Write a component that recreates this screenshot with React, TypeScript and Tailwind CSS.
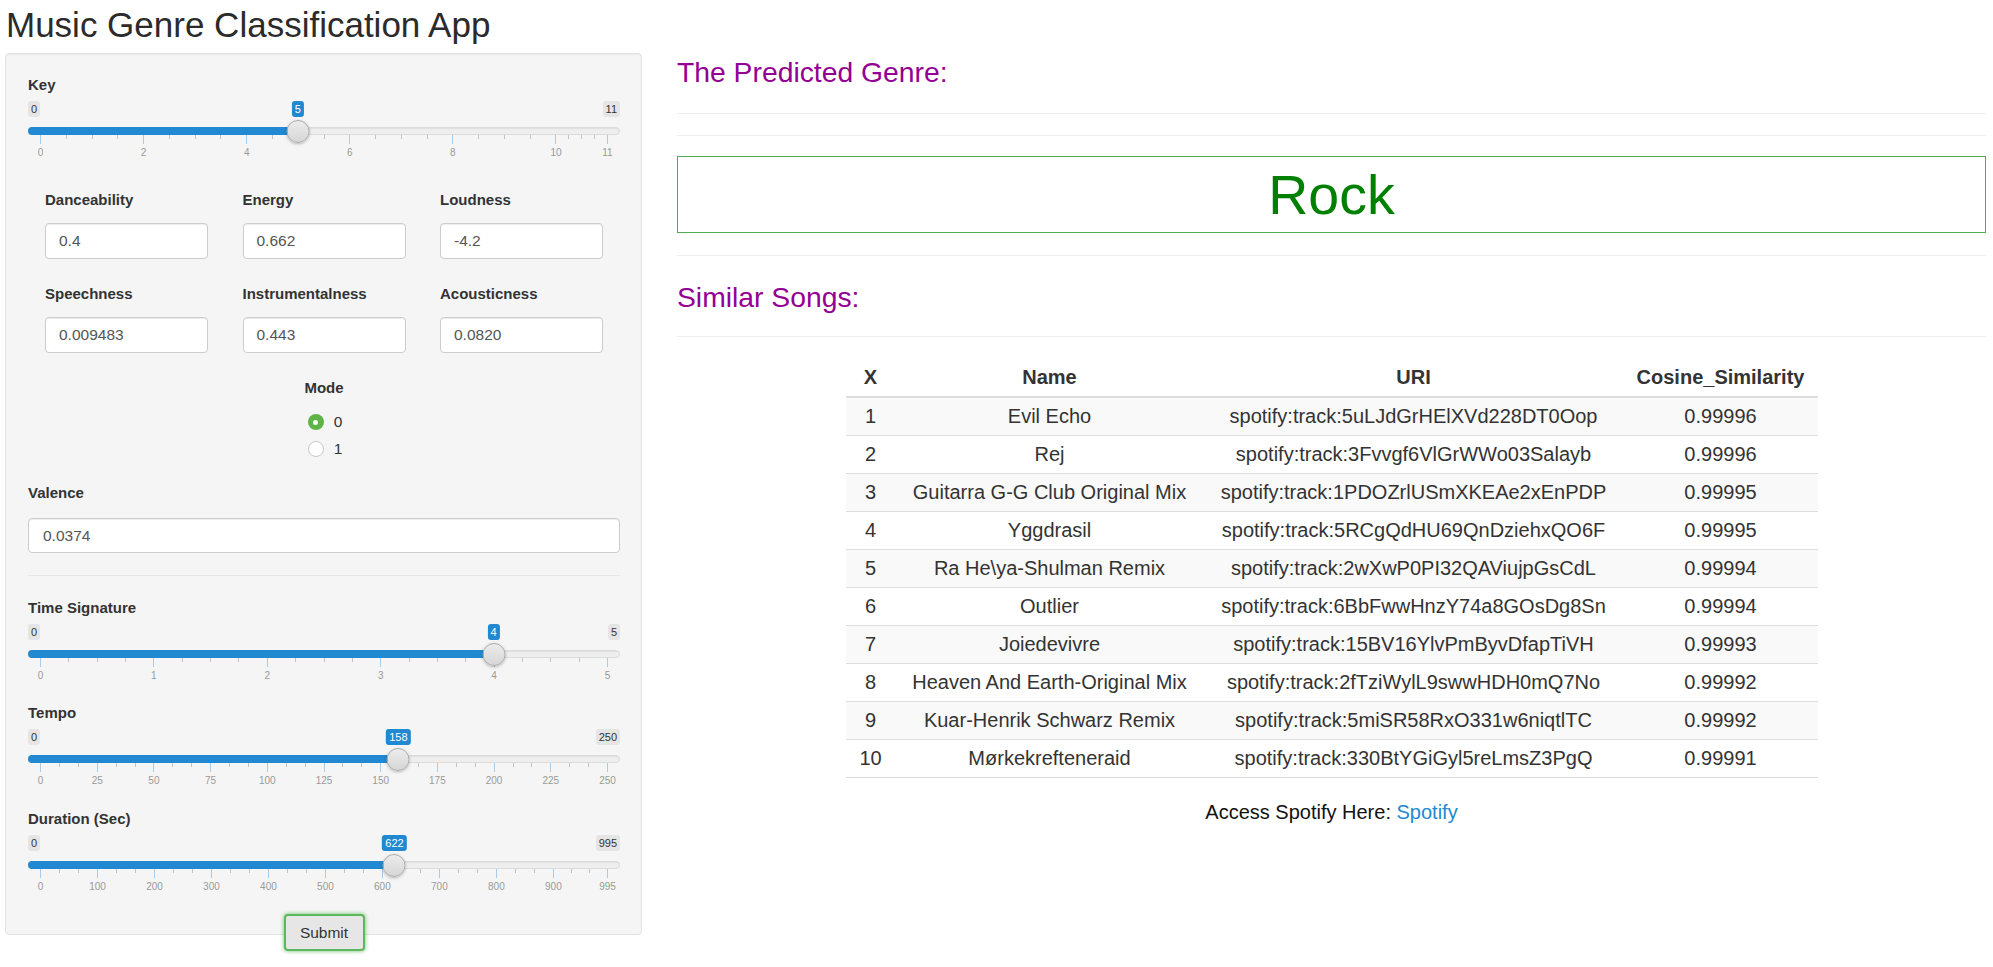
import React from 'react';

const FONT = { fontFamily: '"Liberation Sans", Arial, Helvetica, sans-serif' };

interface SliderProps {
  label: string;
  min: number;
  max: number;
  value: number;
  marks: number[];
  minors: number;
}

const GRID_LEFT = 12;
const GRID_WIDTH = 567;

function RangeSlider({ label, min, max, value, marks, minors }: SliderProps) {
  const pos = (v: number) => GRID_LEFT + ((v - min) / (max - min)) * GRID_WIDTH;
  const handleX = pos(value);

  const minorTicks: number[] = [];
  for (let i = 0; i < marks.length - 1; i++) {
    const a = pos(marks[i]);
    const b = pos(marks[i + 1]);
    for (let j = 1; j <= minors; j++) minorTicks.push(a + ((b - a) * j) / (minors + 1));
  }

  return (
    <div>
      <div className="h-[22px] leading-[22px] text-[15px] font-bold text-[#333]">{label}</div>
      <div className="relative h-[66px]">
        {/* min / max / value labels */}
        <span className="absolute left-0 top-[5px] h-[16px] leading-[16px] px-[3px] rounded-[3px] bg-[#e5e5e5] text-[11px] text-[#333]">
          {min}
        </span>
        <span className="absolute right-0 top-[5px] h-[16px] leading-[16px] px-[3px] rounded-[3px] bg-[#e5e5e5] text-[11px] text-[#333]">
          {max}
        </span>
        <span
          className="absolute top-[5px] h-[16px] leading-[16px] px-[3px] rounded-[3px] bg-[#2188d2] text-[11px] text-white -translate-x-1/2"
          style={{ left: handleX }}
        >
          {value}
        </span>

        {/* track */}
        <div className="absolute left-0 right-0 top-[31px] h-[8px] rounded-full bg-[#eeeeee] border border-[#dcdcdc] shadow-[inset_0_1px_1px_rgba(0,0,0,0.06)]" />
        <div
          className="absolute left-0 top-[31px] h-[8px] rounded-l-full bg-[#2188d2]"
          style={{ width: handleX }}
        />

        {/* grid */}
        {marks.map((m) => (
          <div key={'M' + m}>
            <div className="absolute top-[39px] w-px h-[9px] bg-[#a6cdec]" style={{ left: pos(m) }} />
            <div
              className="absolute top-[51px] text-[10px] leading-[12px] text-[#9a9a9a] -translate-x-1/2"
              style={{ left: pos(m) + 0.5 }}
            >
              {m}
            </div>
          </div>
        ))}
        {minorTicks.map((x, i) => (
          <div key={'m' + i} className="absolute top-[39px] w-px h-[4px] bg-[#c4c4c4]" style={{ left: x }} />
        ))}

        {/* handle */}
        <div
          className="absolute top-[23.5px] w-[23px] h-[23px] rounded-full border border-[#ababab] bg-gradient-to-b from-[#ececec] to-[#d6d6d6] shadow-[0_1px_3px_rgba(0,0,0,0.25)] -translate-x-1/2"
          style={{ left: handleX }}
        />
      </div>
    </div>
  );
}

function NumField({ label, value }: { label: string; value: string }) {
  return (
    <div>
      <div className="h-[22px] leading-[22px] text-[15px] font-bold text-[#333]">{label}</div>
      <div className="mt-[12px] h-[36px] w-[163px] rounded-[4px] border border-[#cccccc] bg-white pl-[13px] flex items-center text-[15.5px] text-[#555] shadow-[inset_0_1px_1px_rgba(0,0,0,0.075)]">
        {value}
      </div>
    </div>
  );
}

function Radio({ checked, label }: { checked: boolean; label: string }) {
  return (
    <div className="flex items-center h-[22px] gap-[10px]">
      {checked ? (
        <span className="w-[16px] h-[16px] rounded-full bg-[#5db548] flex items-center justify-center">
          <span className="w-[5px] h-[5px] rounded-full bg-white" />
        </span>
      ) : (
        <span className="w-[16px] h-[16px] rounded-full bg-white border border-[#c8c8c8]" />
      )}
      <span className="text-[15.5px] text-[#333]">{label}</span>
    </div>
  );
}

const songs = [
  ['1', 'Evil Echo', 'spotify:track:5uLJdGrHElXVd228DT0Oop', '0.99996'],
  ['2', 'Rej', 'spotify:track:3Fvvgf6VlGrWWo03Salayb', '0.99996'],
  ['3', 'Guitarra G-G Club Original Mix', 'spotify:track:1PDOZrlUSmXKEAe2xEnPDP', '0.99995'],
  ['4', 'Yggdrasil', 'spotify:track:5RCgQdHU69QnDziehxQO6F', '0.99995'],
  ['5', 'Ra He\\ya-Shulman Remix', 'spotify:track:2wXwP0PI32QAViujpGsCdL', '0.99994'],
  ['6', 'Outlier', 'spotify:track:6BbFwwHnzY74a8GOsDg8Sn', '0.99994'],
  ['7', 'Joiedevivre', 'spotify:track:15BV16YlvPmByvDfapTiVH', '0.99993'],
  ['8', 'Heaven And Earth-Original Mix', 'spotify:track:2fTziWylL9swwHDH0mQ7No', '0.99992'],
  ['9', 'Kuar-Henrik Schwarz Remix', 'spotify:track:5miSR58RxO331w6niqtlTC', '0.99992'],
  ['10', 'Mørkekrefteneraid', 'spotify:track:330BtYGiGyl5reLmsZ3PgQ', '0.99991'],
];

export default function App() {
  return (
    <div className="min-h-screen w-[1993px] bg-white text-[#333]" style={FONT}>
      <h2 className="pt-[7px] pl-[6px] h-[43px] leading-[36px] text-[35px] font-medium text-[#2b2b2b] mb-[10px]">
        Music Genre Classification App
      </h2>

      <div className="flex items-start">
        {/* Sidebar */}
        <div className="ml-[5px] w-[637px] rounded-[4px] border border-[#e3e3e3] bg-[#f5f5f5] pt-[20px] pl-[22px] pr-[21px] shadow-[inset_0_1px_1px_rgba(0,0,0,0.05)]">
          <RangeSlider label="Key" min={0} max={11} value={5} marks={[0, 2, 4, 6, 8, 10, 11]} minors={3} />

          <div className="mt-[27px] pl-[17px] grid grid-cols-[163px_163px_163px] gap-x-[34.5px] gap-y-[24px]">
            <NumField label="Danceability" value="0.4" />
            <NumField label="Energy" value="0.662" />
            <NumField label="Loudness" value="-4.2" />
            <NumField label="Speechness" value="0.009483" />
            <NumField label="Instrumentalness" value="0.443" />
            <NumField label="Acousticness" value="0.0820" />
          </div>

          <div className="mt-[24px] flex flex-col items-center">
            <div className="h-[22px] leading-[22px] text-[15px] font-bold text-[#333]">Mode</div>
            <div className="mt-[12px] flex flex-col gap-[5px] pl-[2px]">
              <Radio checked label="0" />
              <Radio checked={false} label="1" />
            </div>
          </div>

          <div className="mt-[22px]">
            <div className="h-[22px] leading-[22px] text-[15px] font-bold text-[#333]">Valence</div>
            <div className="mt-[14px] h-[35px] rounded-[4px] border border-[#cccccc] bg-white pl-[14px] flex items-center text-[15.5px] text-[#555] shadow-[inset_0_1px_1px_rgba(0,0,0,0.075)]">
              0.0374
            </div>
          </div>

          <hr className="mt-[22px] border-[#e6e6e6]" />

          <div className="mt-[21px]">
            <RangeSlider label="Time Signature" min={0} max={5} value={4} marks={[0, 1, 2, 3, 4, 5]} minors={3} />
          </div>
          <div className="mt-[17px]">
            <RangeSlider
              label="Tempo"
              min={0}
              max={250}
              value={158}
              marks={[0, 25, 50, 75, 100, 125, 150, 175, 200, 225, 250]}
              minors={2}
            />
          </div>
          <div className="mt-[18px]">
            <RangeSlider
              label="Duration (Sec)"
              min={0}
              max={995}
              value={622}
              marks={[0, 100, 200, 300, 400, 500, 600, 700, 800, 900, 995]}
              minors={2}
            />
          </div>

          <div className="mt-[18px] -mb-[17px] flex justify-center">
            <button className="h-[37px] w-[81px] rounded-[4px] border-2 border-[#5cb85c] bg-[#e6e6e6] text-[15.5px] text-[#333] shadow-[0_0_4px_rgba(92,184,92,0.9)]">
              Submit
            </button>
          </div>
        </div>

        {/* Main panel */}
        <div className="ml-[35px] w-[1309px]">
          <h3 className="mt-[4px] h-[30px] leading-[30px] text-[28.3px] text-[#930093]">The Predicted Genre:</h3>
          <hr className="mt-[26px] border-[#eeeeee]" />
          <hr className="mt-[21px] border-[#eeeeee]" />
          <div className="mt-[20px] h-[77px] border-[1.5px] border-[#4fae4f] flex items-center justify-center pt-[2px]">
            <span className="text-[55.5px] leading-none text-[#008000]">Rock</span>
          </div>
          <hr className="mt-[22px] border-[#eeeeee]" />
          <h3 className="mt-[26px] h-[30px] leading-[30px] text-[28.3px] text-[#930093]">Similar Songs:</h3>
          <hr className="mt-[24px] border-[#eeeeee]" />

          <table className="mt-[21px] mx-auto table-fixed w-[972px] border-collapse text-[20px] text-[#333]">
            <colgroup>
              <col className="w-[50px]" />
              <col className="w-[308px]" />
              <col className="w-[420px]" />
              <col className="w-[194px]" />
            </colgroup>
            <thead>
              <tr className="h-[39px] border-b-2 border-[#dddddd]">
                <th className="font-bold text-center">X</th>
                <th className="font-bold text-center">Name</th>
                <th className="font-bold text-center">URI</th>
                <th className="font-bold text-center">Cosine_Similarity</th>
              </tr>
            </thead>
            <tbody>
              {songs.map((s, i) => (
                <tr
                  key={s[0]}
                  className={
                    'h-[38px] border-b border-[#dddddd] ' + (i % 2 === 0 ? 'bg-[#f9f9f9]' : 'bg-white')
                  }
                >
                  <td className="text-center whitespace-nowrap">{s[0]}</td>
                  <td className="text-center whitespace-nowrap">{s[1]}</td>
                  <td className="text-center whitespace-nowrap">{s[2]}</td>
                  <td className="text-center whitespace-nowrap">{s[3]}</td>
                </tr>
              ))}
            </tbody>
          </table>

          <div className="mt-[20px] h-[28px] leading-[28px] text-center text-[20px] text-[#111]">
            Access Spotify Here: <a className="text-[#2389d0]">Spotify</a>
          </div>
        </div>
      </div>
    </div>
  );
}
